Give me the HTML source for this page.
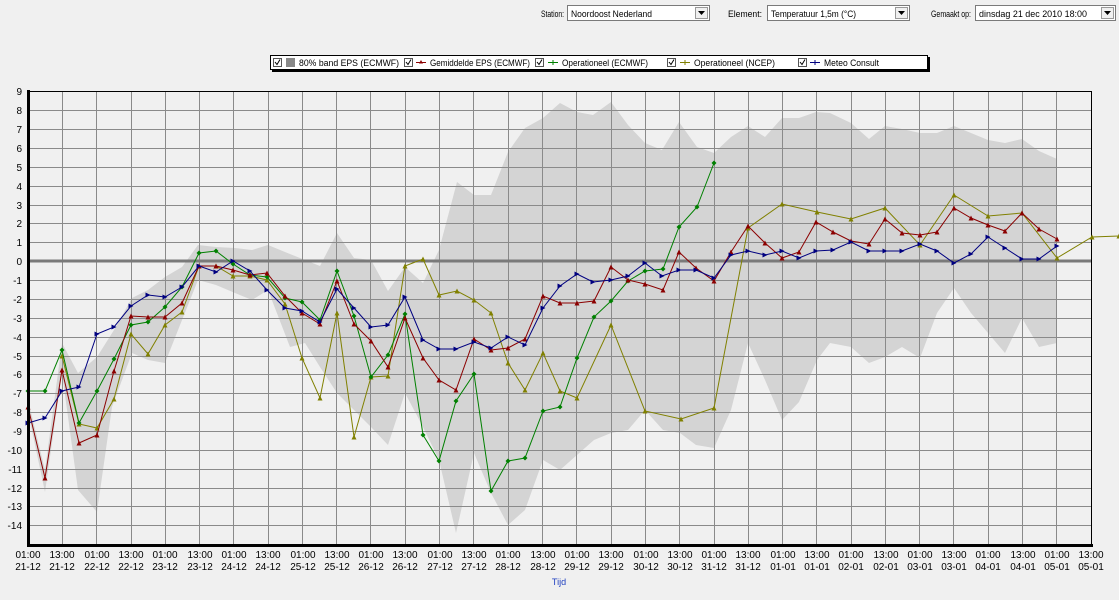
<!DOCTYPE html>
<html><head><meta charset="utf-8"><style>
html,body{margin:0;padding:0;background:#f0f0f0;width:1119px;height:600px;overflow:hidden;font-family:"Liberation Sans",sans-serif;}
</style></head><body>
<svg width="1119" height="600" xmlns="http://www.w3.org/2000/svg" style="position:absolute;left:0;top:0;font-family:'Liberation Sans',sans-serif">
<defs>
<marker id="mr" markerWidth="5" markerHeight="5" refX="2.5" refY="2.5" markerUnits="userSpaceOnUse"><path d="M2.5 0L5 5H0Z" fill="#8b0000"/></marker>
<marker id="mg" markerWidth="5" markerHeight="5" refX="2.5" refY="2.5" markerUnits="userSpaceOnUse"><path d="M2.5 0L5 2.5L2.5 5L0 2.5Z" fill="#008000"/></marker>
<marker id="mo" markerWidth="5" markerHeight="5" refX="2.5" refY="2.5" markerUnits="userSpaceOnUse"><path d="M2.5 0L5 5H0Z" fill="#808000"/></marker>
<marker id="mb" markerWidth="5" markerHeight="5" refX="2.5" refY="2.5" markerUnits="userSpaceOnUse"><path d="M0 0L5 2.5L0 5Z" fill="#000080"/></marker>
</defs>
<!-- top controls -->
<g font-size="9.5" fill="#000">
<text x="541" y="17" textLength="23" lengthAdjust="spacingAndGlyphs">Station:</text>
<rect x="567.5" y="5.5" width="142" height="15" fill="#fff" stroke="#7a7a7a"/>
<text x="571" y="17" textLength="81" lengthAdjust="spacingAndGlyphs">Noordoost Nederland</text>
<rect x="695.5" y="7.5" width="12" height="11" fill="#f0f0f0" stroke="#999"/><path d="M698 11h7l-3.5 4z" fill="#000"/>
<text x="728" y="17" textLength="34" lengthAdjust="spacingAndGlyphs">Element:</text>
<rect x="767.5" y="5.5" width="142" height="15" fill="#fff" stroke="#7a7a7a"/>
<text x="771" y="17" textLength="85" lengthAdjust="spacingAndGlyphs">Temperatuur 1,5m (°C)</text>
<rect x="895.5" y="7.5" width="12" height="11" fill="#f0f0f0" stroke="#999"/><path d="M898 11h7l-3.5 4z" fill="#000"/>
<text x="931" y="17" textLength="40" lengthAdjust="spacingAndGlyphs">Gemaakt op:</text>
<rect x="975.5" y="5.5" width="140" height="15" fill="#fff" stroke="#7a7a7a"/>
<text x="979" y="17" textLength="108" lengthAdjust="spacingAndGlyphs">dinsdag 21 dec 2010 18:00</text>
<rect x="1101.5" y="7.5" width="12" height="11" fill="#f0f0f0" stroke="#999"/><path d="M1104 11h7l-3.5 4z" fill="#000"/>
</g>
<!-- band -->
<polygon fill="#d4d4d4" points="28,400 45,470 62,343 78,373 97,357 114,330 132,298 148,290 165,277 182,267 198,245 216,247 235,248 252,250 268,245 285,252 305,260 320,266 337,233 354,258 371,260 388,291 405,267 423,283 439,250 457,182 474,195 491,195 508,152 525,128 543,118 560,103 577,112 593,115 611,102 628,125 645,143 662,150 679,122 697,147 714,153 731,137 748,126 765,137 782,118 799,118 816,112 830,113 851,123 869,139 885,126 902,129 920,133 937,133 954,126 971,133 988,140 1005,143 1022,139 1039,151 1057,159 1057,343 1039,347 1022,318 1005,353 988,333 971,313 954,288 937,313 920,358 902,347 885,357 869,363 851,347 830,343 817,360 799,402 782,420 765,380 748,343 731,410 714,448 696,445 680,433 663,430 645,410 628,430 611,433 594,440 577,455 560,470 543,460 525,510 508,525 491,493 474,453 456,533 439,460 423,427 405,393 388,445 371,427 354,410 337,393 320,367 305,343 290,347 268,290 252,300 235,293 216,285 198,280 182,320 165,363 148,360 132,353 112,407 97,512 78,490 62,373 45,492 28,412"/>
<!-- grid -->
<g stroke="#8a8a8a" stroke-width="1">
<path d="M28 91.5H1092M28 110.5H1092M28 129.5H1092M28 148.5H1092M28 167.5H1092M28 186.5H1092M28 205.5H1092M28 223.5H1092M28 242.5H1092M28 280.5H1092M28 299.5H1092M28 318.5H1092M28 337.5H1092M28 356.5H1092M28 374.5H1092M28 393.5H1092M28 412.5H1092M28 431.5H1092M28 450.5H1092M28 469.5H1092M28 488.5H1092M28 506.5H1092M28 525.5H1092"/>
<path d="M62.5 91V544M96.5 91V544M131.5 91V544M165.5 91V544M199.5 91V544M233.5 91V544M268.5 91V544M302.5 91V544M336.5 91V544M370.5 91V544M405.5 91V544M439.5 91V544M473.5 91V544M508.5 91V544M542.5 91V544M576.5 91V544M611.5 91V544M645.5 91V544M679.5 91V544M714.5 91V544M748.5 91V544M782.5 91V544M816.5 91V544M851.5 91V544M885.5 91V544M919.5 91V544M953.5 91V544M988.5 91V544M1022.5 91V544M1056.5 91V544"/>
</g>
<path d="M28 261H1092" stroke="#7a7a7a" stroke-width="3"/>
<path d="M28 91.5H1091.5V544" stroke="#000" stroke-width="1" fill="none"/>
<!-- series -->
<g fill="none" stroke-width="1">
<polyline stroke="#808000" marker-start="url(#mo)" marker-mid="url(#mo)" marker-end="url(#mo)" points="62,356 79,424 97,428 114,399 131,334 148,354 165,325 182,312 199,266 216,266 233,276 250,276 267,280 285,304 302,358 320,398 337,313 354,437 371,377 388,376 405,266 423,259 439,295 457,291 474,300 491,313 508,363 525,390 543,353 560,391 577,398 611,325 645,411 681,419 714,408 748,228 782,204 817,212 851,219 885,208 920,245 954,195 988,216 1022,213 1057,258 1092,237 1119,236"/>
<polyline stroke="#008000" marker-start="url(#mg)" marker-mid="url(#mg)" marker-end="url(#mg)" points="28,391 45,391 62,350 79,423 97,391 114,359 131,325 148,322 165,307 182,287 199,253 216,251 233,264 250,275 267,277 285,298 302,302 320,320 337,271 354,316 371,377 388,355 405,314 423,435 439,461 456,401 474,374 491,491 508,461 525,458 543,411 560,407 577,358 594,317 611,301 628,281 645,271 663,269 679,227 697,207 714,163"/>
<polyline stroke="#8b0000" marker-start="url(#mr)" marker-mid="url(#mr)" marker-end="url(#mr)" points="28,407 45,478 62,370 79,443 97,435 114,371 131,316 148,317 165,317 182,303 199,266 216,266 233,270 250,275 267,273 285,296 302,313 320,324 337,281 354,324 371,341 388,367 405,318 423,358 439,380 456,390 474,339 491,350 508,348 525,339 543,296 560,303 577,303 594,301 611,267 628,280 645,284 663,290 679,252 696,268 714,281 731,252 748,226 765,243 782,258 799,252 816,222 833,232 851,241 869,244 885,219 902,233 920,235 937,232 954,208 971,218 988,225 1005,231 1022,213 1039,229 1057,239"/>
<polyline stroke="#000080" marker-start="url(#mb)" marker-mid="url(#mb)" marker-end="url(#mb)" points="28,423 45,418 62,391 79,387 97,334 114,327 131,306 148,295 165,297 182,287 199,266 216,272 233,261 250,271 267,290 285,308 302,311 320,322 337,289 354,308 371,327 388,325 405,297 423,340 439,349 456,349 474,342 491,348 508,337 525,345 543,308 560,286 577,274 593,282 611,280 628,276 645,263 662,276 679,270 696,270 714,278 731,255 748,251 765,255 782,251 799,258 816,251 833,250 851,242 869,251 885,251 902,251 920,244 937,251 954,263 971,254 988,237 1005,248 1022,259 1039,259 1057,246"/>
</g>
<!-- axes -->
<path d="M28.5 90V545.5H1093" stroke="#000" stroke-width="3" fill="none"/>
<g font-size="10" fill="#000" text-anchor="end">
<text x="22" y="95">9</text><text x="22" y="114">8</text><text x="22" y="133">7</text><text x="22" y="152">6</text><text x="22" y="171">5</text><text x="22" y="190">4</text><text x="22" y="209">3</text><text x="22" y="227">2</text><text x="22" y="246">1</text><text x="22" y="265">0</text><text x="22" y="284">-1</text><text x="22" y="303">-2</text><text x="22" y="322">-3</text><text x="22" y="341">-4</text><text x="22" y="360">-5</text><text x="22" y="378">-6</text><text x="22" y="397">-7</text><text x="22" y="416">-8</text><text x="22" y="435">-9</text><text x="22" y="454">-10</text><text x="22" y="473">-11</text><text x="22" y="492">-12</text><text x="22" y="510">-13</text><text x="22" y="529">-14</text>
</g>
<g font-size="10" fill="#000" text-anchor="middle">
<text x="28" y="558">01:00</text><text x="28" y="570">21-12</text>
<text x="62" y="558">13:00</text><text x="62" y="570">21-12</text>
<text x="97" y="558">01:00</text><text x="97" y="570">22-12</text>
<text x="131" y="558">13:00</text><text x="131" y="570">22-12</text>
<text x="165" y="558">01:00</text><text x="165" y="570">23-12</text>
<text x="200" y="558">13:00</text><text x="200" y="570">23-12</text>
<text x="234" y="558">01:00</text><text x="234" y="570">24-12</text>
<text x="268" y="558">13:00</text><text x="268" y="570">24-12</text>
<text x="303" y="558">01:00</text><text x="303" y="570">25-12</text>
<text x="337" y="558">13:00</text><text x="337" y="570">25-12</text>
<text x="371" y="558">01:00</text><text x="371" y="570">26-12</text>
<text x="405" y="558">13:00</text><text x="405" y="570">26-12</text>
<text x="440" y="558">01:00</text><text x="440" y="570">27-12</text>
<text x="474" y="558">13:00</text><text x="474" y="570">27-12</text>
<text x="508" y="558">01:00</text><text x="508" y="570">28-12</text>
<text x="543" y="558">13:00</text><text x="543" y="570">28-12</text>
<text x="577" y="558">01:00</text><text x="577" y="570">29-12</text>
<text x="611" y="558">13:00</text><text x="611" y="570">29-12</text>
<text x="646" y="558">01:00</text><text x="646" y="570">30-12</text>
<text x="680" y="558">13:00</text><text x="680" y="570">30-12</text>
<text x="714" y="558">01:00</text><text x="714" y="570">31-12</text>
<text x="748" y="558">13:00</text><text x="748" y="570">31-12</text>
<text x="783" y="558">01:00</text><text x="783" y="570">01-01</text>
<text x="817" y="558">13:00</text><text x="817" y="570">01-01</text>
<text x="851" y="558">01:00</text><text x="851" y="570">02-01</text>
<text x="886" y="558">13:00</text><text x="886" y="570">02-01</text>
<text x="920" y="558">01:00</text><text x="920" y="570">03-01</text>
<text x="954" y="558">13:00</text><text x="954" y="570">03-01</text>
<text x="988" y="558">01:00</text><text x="988" y="570">04-01</text>
<text x="1023" y="558">13:00</text><text x="1023" y="570">04-01</text>
<text x="1057" y="558">01:00</text><text x="1057" y="570">05-01</text>
<text x="1091" y="558">13:00</text><text x="1091" y="570">05-01</text>
<text x="559" y="585" fill="#2040c0" font-size="9">Tijd</text>
</g>
<!-- legend -->
<rect x="272" y="57" width="658" height="15" fill="#000"/>
<rect x="270.5" y="55.5" width="657" height="14" fill="#fff" stroke="#000"/>
<g font-size="9" fill="#000">
<rect x="273.5" y="58.5" width="8" height="8" fill="#fff" stroke="#555"/><path d="M275 62l2 2.5 3-5" stroke="#000" fill="none"/>
<rect x="286" y="58" width="9" height="9" fill="#888"/>
<text x="299" y="66" textLength="100" lengthAdjust="spacingAndGlyphs">80% band EPS (ECMWF)</text>
<rect x="404.5" y="58.5" width="8" height="8" fill="#fff" stroke="#555"/><path d="M406 62l2 2.5 3-5" stroke="#000" fill="none"/>
<path d="M416 62.5h10" stroke="#8b0000"/><path d="M421 60l2 3.5h-4z" fill="#8b0000"/>
<text x="430" y="66" textLength="100" lengthAdjust="spacingAndGlyphs">Gemiddelde EPS (ECMWF)</text>
<rect x="535.5" y="58.5" width="8" height="8" fill="#fff" stroke="#555"/><path d="M537 62l2 2.5 3-5" stroke="#000" fill="none"/>
<path d="M548 62.5h10M553 60v5" stroke="#008000"/>
<text x="562" y="66" textLength="86" lengthAdjust="spacingAndGlyphs">Operationeel (ECMWF)</text>
<rect x="667.5" y="58.5" width="8" height="8" fill="#fff" stroke="#555"/><path d="M669 62l2 2.5 3-5" stroke="#000" fill="none"/>
<path d="M680 62.5h10M685 60v5" stroke="#808000"/>
<text x="694" y="66" textLength="81" lengthAdjust="spacingAndGlyphs">Operationeel (NCEP)</text>
<rect x="798.5" y="58.5" width="8" height="8" fill="#fff" stroke="#555"/><path d="M800 62l2 2.5 3-5" stroke="#000" fill="none"/>
<path d="M810 62.5h10M815 60v5" stroke="#000080"/>
<text x="824" y="66" textLength="55" lengthAdjust="spacingAndGlyphs">Meteo Consult</text>
</g>
</svg>
</body></html>
